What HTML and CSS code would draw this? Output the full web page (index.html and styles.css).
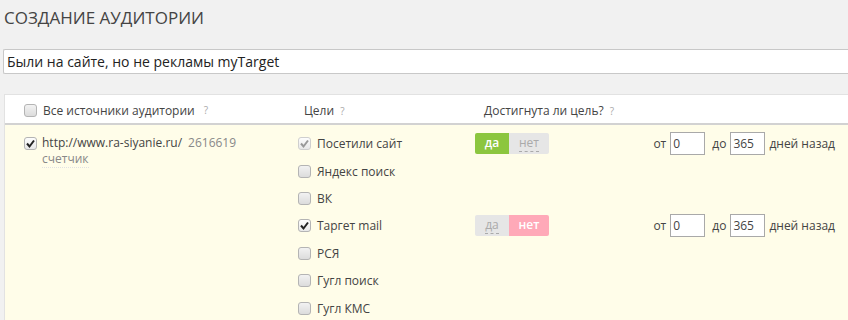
FILE: index.html
```html
<!DOCTYPE html>
<html lang="ru">

<head>
  <meta charset="UTF-8">
  <meta name="viewport" content="width=device-width, initial-scale=1.0">
  <title>Создание аудитории</title>
  <link rel="stylesheet" href="styles.css">
</head>

<body>
  <div class="page">
    <h1 class="pageTitle">Создание аудитории</h1>
    <input type="text" class="nameInput" value="Были на сайте, но не рекламы myTarget">

    <div class="audience">
      <div class="audHead">
        <div class="colSource">
          <span class="box"></span>
          <span>Все источники аудитории</span>
          <span class="hint">?</span>
        </div>
        <div class="colGoal">Цели <span class="hint">?</span></div>
        <div class="colReached">Достигнута ли цель? <span class="hint">?</span></div>
      </div>

      <div class="audBody">
        <div class="source">
          <span class="box checked">
            <svg viewBox="0 0 13 13" width="13" height="13"><path d="M3 6.5 L5.5 9.5 L10 3.5" fill="none" stroke="#222" stroke-width="2"/></svg>
          </span>
          <div>
            <div class="sourceLine"><span class="url">http://www.ra-siyanie.ru/</span><span class="counterId">2616619</span></div>
            <div class="sourceLine"><span class="counterType">счетчик</span></div>
          </div>
        </div>

        <div class="goals">
          <div class="goal">
            <label class="goalName">
              <span class="box checked dim">
                <svg viewBox="0 0 13 13" width="13" height="13"><path d="M3 6.5 L5.5 9.5 L10 3.5" fill="none" stroke="#999" stroke-width="2"/></svg>
              </span>
              Посетили сайт
            </label>
            <div class="toggle">
              <span class="yes on">да</span><span class="no"><u>нет</u></span>
            </div>
            <div class="range">
              от <input type="text" class="days" value="0">
              до <input type="text" class="days" value="365">
              дней назад
            </div>
          </div>

          <div class="goal">
            <label class="goalName"><span class="box"></span>Яндекс поиск</label>
          </div>

          <div class="goal">
            <label class="goalName"><span class="box"></span>ВК</label>
          </div>

          <div class="goal">
            <label class="goalName">
              <span class="box checked">
                <svg viewBox="0 0 13 13" width="13" height="13"><path d="M3 6.5 L5.5 9.5 L10 3.5" fill="none" stroke="#222" stroke-width="2"/></svg>
              </span>
              Таргет mail
            </label>
            <div class="toggle">
              <span class="yes"><u>да</u></span><span class="no on">нет</span>
            </div>
            <div class="range">
              от <input type="text" class="days" value="0">
              до <input type="text" class="days" value="365">
              дней назад
            </div>
          </div>

          <div class="goal">
            <label class="goalName"><span class="box"></span>РСЯ</label>
          </div>

          <div class="goal">
            <label class="goalName"><span class="box"></span>Гугл поиск</label>
          </div>

          <div class="goal">
            <label class="goalName"><span class="box"></span>Гугл КМС</label>
          </div>
        </div>
      </div>
    </div>
  </div>
</body>

</html>
```

FILE: styles.css
```css
body {
  margin: 0;
  font-family: "Open Sans", Arial, sans-serif;
  background-color: #f1f1f1;
  color: #444;
  overflow: hidden;
}

.page {
  width: 848px;
  padding-top: 6px;
}

.pageTitle {
  margin: 0 0 0 4px;
  font-size: 17px;
  font-weight: normal;
  text-transform: uppercase;
  color: #444;
  line-height: 24px;
}

.nameInput {
  display: block;
  box-sizing: border-box;
  width: 845px;
  height: 25px;
  margin: 19px 0 0 3px;
  padding: 0 3px;
  border: 1px solid #c8c8c8;
  border-right: none;
  border-radius: 2px 0 0 2px;
  font-family: inherit;
  font-size: 14px;
  color: #222;
  background: white;
}

.audience {
  margin: 20px 0 0 4px;
  border: 1px solid #e2e2e2;
  border-right: none;
  background: white;
}

.audHead {
  display: flex;
  align-items: center;
  height: 26px;
  padding-top: 2px;
  font-size: 12px;
  color: #444;
  border-bottom: 2px solid #d2d2d2;
}

.hint {
  font-size: 10px;
  color: #aaa;
  margin-left: 3px;
}

.colSource {
  display: flex;
  align-items: center;
  gap: 6px;
  width: 280px;
  padding-left: 19px;
}

.colGoal {
  width: 180px;
}

.audBody {
  display: flex;
  background: #fffde9;
  padding: 5px 0 8px;
  font-size: 12px;
}

.source {
  display: flex;
  align-items: flex-start;
  gap: 5px;
  width: 274px;
  padding: 5px 0 0 19px;
}

.source .box {
  margin-top: 2px;
}

.sourceLine {
  height: 16px;
  line-height: 16px;
}

.url {
  color: #444;
}

.counterId {
  color: #888;
  margin-left: 6px;
}

.counterType {
  color: #888;
  border-bottom: 1px dotted #e2e2e2;
}

.goals {
  flex: 1;
}

.goal {
  display: flex;
  align-items: center;
  height: 27.4px;
}

.goalName {
  display: flex;
  align-items: center;
  gap: 6px;
  width: 177px;
  color: #444;
}

.box {
  display: inline-block;
  box-sizing: border-box;
  width: 13px;
  height: 13px;
  border: 1px solid #b4b4b4;
  border-radius: 3px;
  background: linear-gradient(#f2f2f2, #dcdcdc);
  flex-shrink: 0;
}

.box svg {
  display: block;
  margin: -1px;
}

.box.checked {
  background: linear-gradient(#fdfdfd, #e8e8e8);
}

.box.dim {
  border-color: #cfcfcf;
}

.toggle {
  display: flex;
  height: 21px;
  font-size: 12px;
  line-height: 19px;
  text-align: center;
}

.toggle span {
  background: #e6e6e6;
  color: #aaa;
}

.toggle u {
  text-decoration: none;
  border-bottom: 1px dashed #aaa;
}

.toggle .yes {
  width: 34px;
  border-radius: 2px 0 0 2px;
}

.toggle .no {
  width: 40px;
  border-radius: 0 2px 2px 0;
}

.toggle .yes.on {
  background: #8cc63f;
  color: white;
  font-weight: 600;
}

.toggle .no.on {
  background: #ffa9b8;
  color: white;
  font-weight: 600;
}

.goal .range {
  margin-left: auto;
  margin-right: 13px;
  display: flex;
  align-items: center;
  gap: 4px;
  color: #444;
}

.days {
  box-sizing: border-box;
  width: 35px;
  height: 23px;
  margin: 0;
  padding: 0 2px;
  border: 1px solid #a9a9a9;
  font-family: inherit;
  font-size: 12px;
  color: #444;
  background: white;
}

.days:first-of-type {
  margin-right: 3px;
}
```
